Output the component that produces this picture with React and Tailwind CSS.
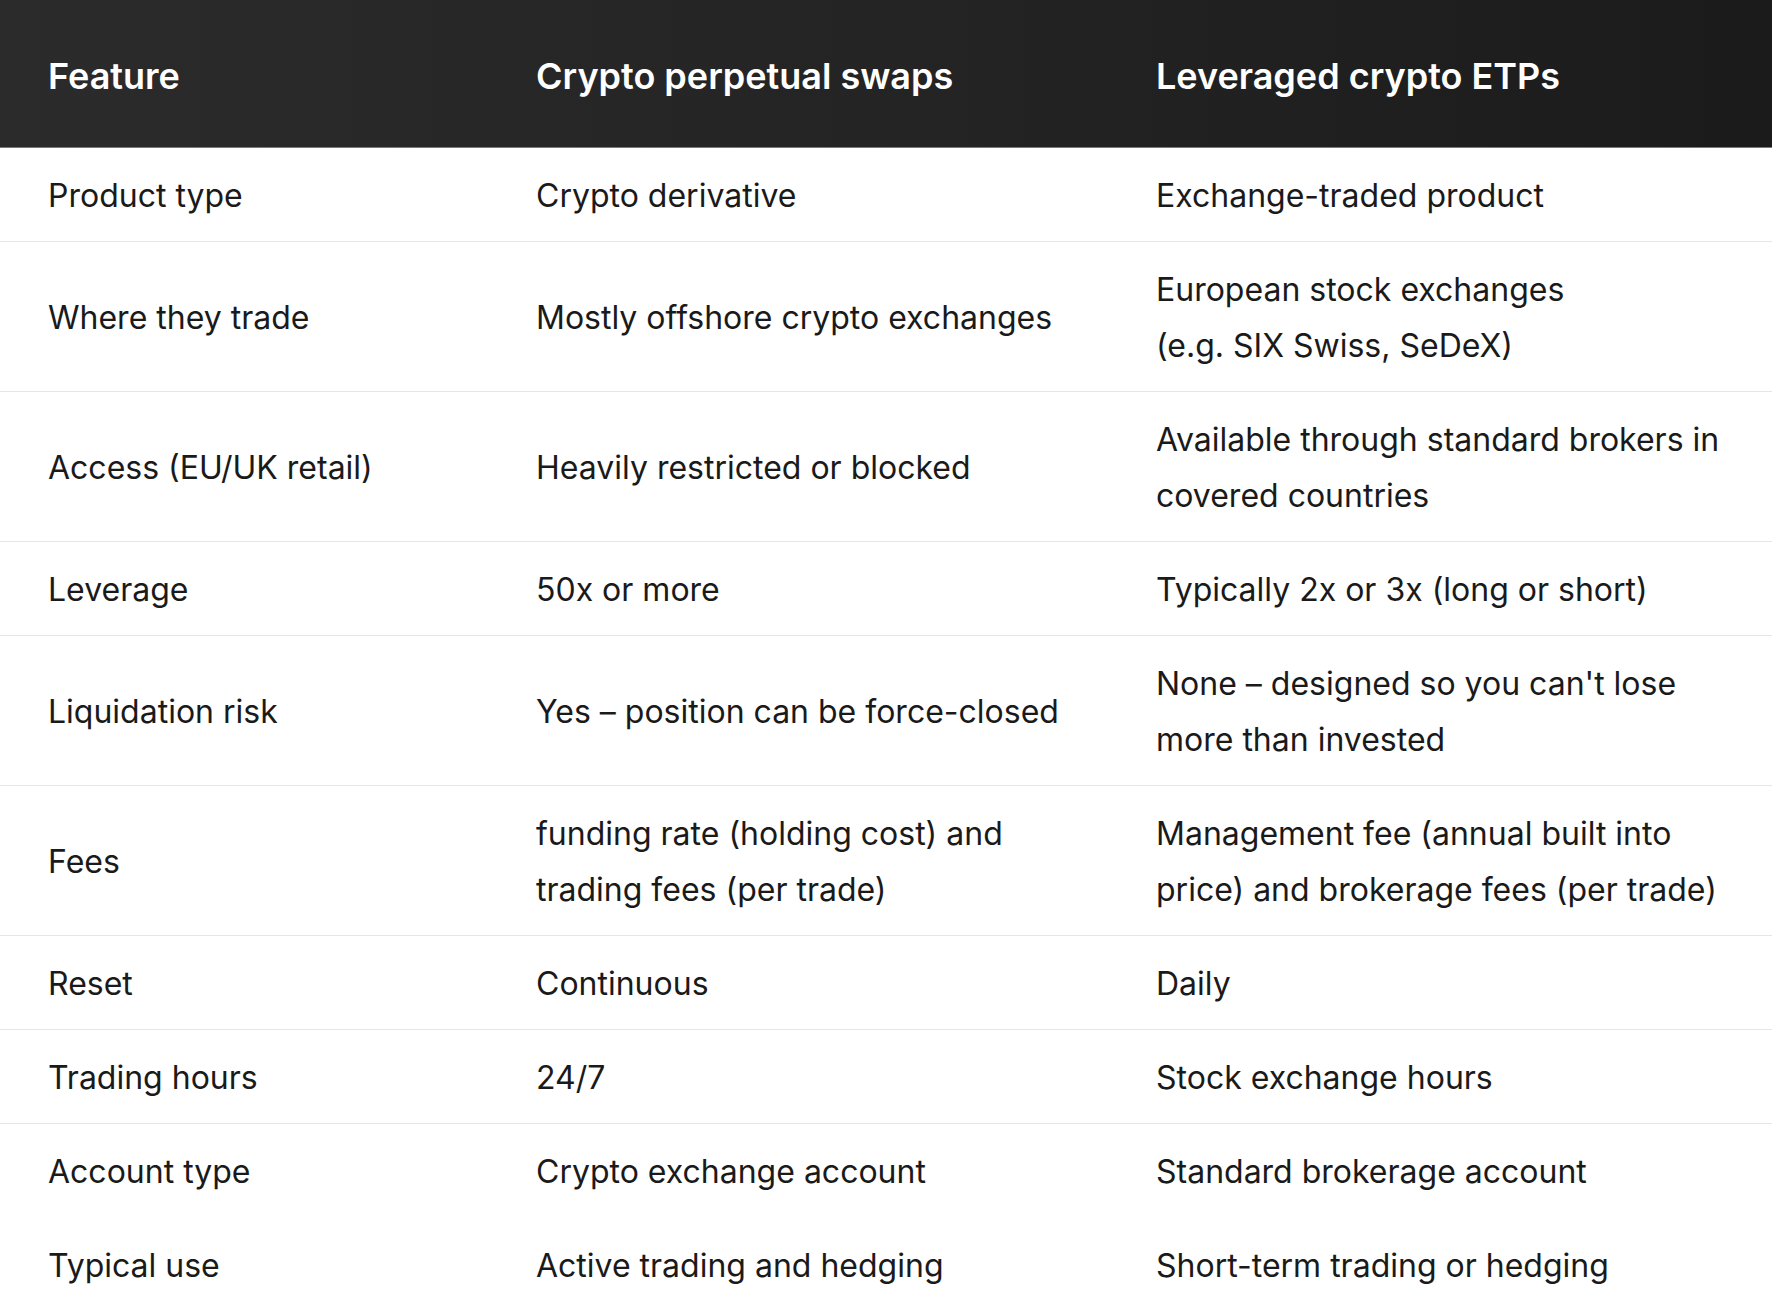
import React from "react";

const rows = [
  ["Product type", "Crypto derivative", "Exchange-traded product", true],
  ["Where they trade", "Mostly offshore crypto exchanges", <>European stock exchanges<br />(e.g. SIX Swiss, SeDeX)</>, true],
  ["Access (EU/UK retail)", "Heavily restricted or blocked", "Available through standard brokers in covered countries", true],
  ["Leverage", "50x or more", "Typically 2x or 3x (long or short)", true],
  ["Liquidation risk", "Yes – position can be force-closed", "None – designed so you can't lose more than invested", true],
  ["Fees", "funding rate (holding cost) and trading fees (per trade)", "Management fee (annual built into price) and brokerage fees (per trade)", true],
  ["Reset", "Continuous", "Daily", true],
  ["Trading hours", "24/7", "Stock exchange hours", true],
  ["Account type", "Crypto exchange account", "Standard brokerage account", false],
  ["Typical use", "Active trading and hedging", "Short-term trading or hedging", true],
];

export default function App() {
  return (
    <div
      className="w-[1772px] h-[1310px] bg-white overflow-hidden"
      style={{ fontFamily: "Inter, 'Noto Sans', sans-serif" }}
    >
      <div className="grid grid-cols-[488px_620px_1fr] h-[148px] items-center pt-[4px] bg-gradient-to-r from-[#2b2b2b] via-[#242424] to-[#1b1b1b] border-b border-[#7a7a7a] text-white font-semibold text-[36px] leading-[56px]">
        <div className="pl-[48px] pr-[40px]">Feature</div>
        <div className="pl-[48px] pr-[40px]">Crypto perpetual swaps</div>
        <div className="pl-[48px] pr-[40px]">Leveraged crypto ETPs</div>
      </div>
      {rows.map(([a, b, c, border], i) => (
        <div
          key={i}
          className={
            "grid grid-cols-[488px_620px_1fr] items-center text-[32px] leading-[56px] text-[#1a1a1a] pt-[20px] pb-[17px] " +
            (border ? "border-b border-[#e6e6e6]" : "border-b border-transparent")
          }
        >
          <div className="pl-[48px] pr-[40px]">{a}</div>
          <div className="pl-[48px] pr-[40px]">{b}</div>
          <div className="pl-[48px] pr-[40px]">{c}</div>
        </div>
      ))}
    </div>
  );
}
